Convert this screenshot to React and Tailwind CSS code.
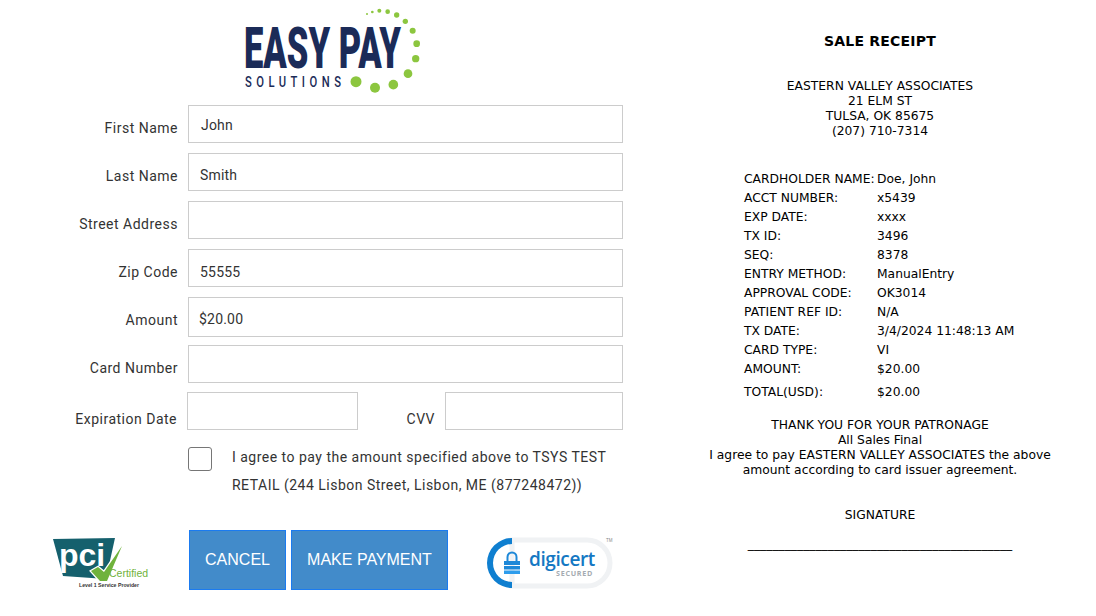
import React from "react";

const Row = ({ label, value, className = "mb-[10px]", h = "h-[38px]", tx = "pl-[11px]", lp = "pt-[9px]" }) => (
  <div className={`flex items-center ${className}`}>
    <label className={`w-[178px] text-right text-[14px] tracking-[0.5px] text-[#333] ${lp} shrink-0`}>{label}</label>
    <div className={`ml-[10px] w-[435px] ${h} border border-[#ccc] flex items-center ${tx} text-[14px] tracking-[0.2px] text-[#333]`}>{value}</div>
  </div>
);

const rows = [
  ["CARDHOLDER NAME:", "Doe, John"],
  ["ACCT NUMBER:", "x5439"],
  ["EXP DATE:", "xxxx"],
  ["TX ID:", "3496"],
  ["SEQ:", "8378"],
  ["ENTRY METHOD:", "ManualEntry"],
  ["APPROVAL CODE:", "OK3014"],
  ["PATIENT REF ID:", "N/A"],
  ["TX DATE:", "3/4/2024 11:48:13 AM"],
  ["CARD TYPE:", "VI"],
  ["AMOUNT:", "$20.00"],
];

const dots = [[411,42,3],[427,36,4],[448,32,6],[473,35,7],[500,45,8],[526,64,8],[548,92,9],[560,131,10],[557,176,11],[534,221,13],[490,254,14.5],[435,263,15],[378,245,16.5]];

export default function App() {
  return (
    <div className="w-[1096px] h-[616px] bg-white overflow-hidden flex font-['Roboto',sans-serif]">
      <div className="w-[660px] shrink-0 flex flex-col">
        <div className="h-[105px] pl-[230px] shrink-0">
          <div className="relative w-[200px] h-[100px]">
            <span className="absolute left-[14px] top-[26px] font-black text-[58px] leading-[44px] text-[#1b2b58] origin-left scale-x-[0.595] whitespace-nowrap">EASY PAY</span>
            <span className="absolute left-[15px] top-[75px] text-[14px] leading-[14px] font-medium text-[#1b2b58] tracking-[5.6px] origin-left scale-x-[0.8] whitespace-nowrap">SOLUTIONS</span>
            <svg viewBox="0 0 600 300" className="absolute inset-0 w-[200px] h-[100px]">
              {dots.map(([x,y,r]) => (
                <circle key={x} cx={x} cy={y} r={r} fill="#8cc63f" />
              ))}
            </svg>
          </div>
        </div>
        <div className="flex flex-col">
          <Row label="First Name" value={<span className="pt-[2px]">John</span>} tx="pl-[12px]" />
          <Row label="Last Name" value={<span className="pt-[6px]">Smith</span>} />
          <Row label="Street Address" value="" />
          <Row label="Zip Code" value={<span className="pt-[8px]">55555</span>} />
          <Row label="Amount" lp="pt-[7px]" value={<span className="pt-[4px]">$20.00</span>} h="h-[40px]" className="mb-[8px]" tx="pl-[10px]" />
          <Row label="Card Number" value="" />
          <div className="flex items-center mt-[-1px] mb-[10px]">
            <label className="w-[177px] text-right text-[14px] tracking-[0.5px] text-[#333] pt-[16px] shrink-0">Expiration Date</label>
            <div className="ml-[10px] w-[171px] h-[38px] border border-[#ccc]"></div>
            <label className="w-[77px] text-right text-[14px] tracking-[0.5px] text-[#333] pt-[16px]">CVV</label>
            <div className="ml-[10px] w-[178px] h-[38px] border border-[#ccc]"></div>
          </div>
          <div className="flex ml-[188px] h-[61px]">
            <div className="mt-[7px] w-[24px] h-[24px] border border-[#767676] rounded-[3px] shrink-0"></div>
            <p className="ml-[20px] mt-[3px] w-[385px] text-[14px] leading-[28px] tracking-[0.49px] text-[#333]">I agree to pay the amount specified above to TSYS TEST RETAIL (244 Lisbon Street, Lisbon, ME (877248472))</p>
          </div>
          <div className="flex mt-[29px] h-[60px]">
            <div className="relative w-[189px] shrink-0">
              <svg viewBox="0 0 120 70" className="absolute left-[40px] top-[-5px] w-[120px] h-[70px]">
                <path d="M13 14 L75 13 L66 54 L23 51 Z" fill="#15606d" />
                <text x="19" y="41" fontFamily="'Liberation Sans',sans-serif" fontWeight="700" fontSize="32" fill="#fff">pci</text>
                <path d="M51 46 L58 42 L64 47 L82 21 L67 56 L60 56 Z" fill="#fff" stroke="#fff" strokeWidth="2.5" />
                <path d="M51 46 L58 42 L64 47 L82 21 L67 56 L60 56 Z" fill="#6fb23c" />
                <text x="69" y="52" fontFamily="'Liberation Sans',sans-serif" fontSize="10.5" fill="#6fb23c">Certified</text>
                <text x="39" y="62" fontFamily="'Liberation Sans',sans-serif" fontWeight="700" fontSize="5.2" fill="#333">Level 1 Service Provider</text>
              </svg>
            </div>
            <div className="w-[97px] h-[60px] bg-[#428bca] border border-[#1b7bf0] flex items-center justify-center text-white text-[16px] font-['Liberation_Sans',sans-serif]">CANCEL</div>
            <div className="ml-[5px] w-[157px] h-[60px] bg-[#428bca] border border-[#1b7bf0] flex items-center justify-center text-white text-[16px] font-['Liberation_Sans',sans-serif]">MAKE PAYMENT</div>
            <div className="relative flex-1">
              <svg viewBox="0 0 160 70" className="absolute left-[22px] top-[-5px] w-[160px] h-[70px]">
                <path d="M42 15 H117 A23 23 0 0 1 117 61 H42 Z" fill="#fff" stroke="#f0f2f4" strokeWidth="5" />
                <path d="M42 13 A25 25 0 0 0 42 63 L42 57 A19 19 0 0 1 42 19 Z" fill="#0f7fd0" />
                <rect x="34" y="36" width="16" height="4" fill="#1e88d8" />
                <rect x="34" y="41" width="16" height="3.5" fill="#1e88d8" />
                <rect x="34" y="45.5" width="16" height="3.5" fill="#2d9cec" />
                <path d="M37.5 36 V32 A4.5 4.5 0 0 1 46.5 32 V36" fill="none" stroke="#1e88d8" strokeWidth="2" />
                <text x="59" y="41" fontFamily="'Open Sans',sans-serif" fontWeight="600" fontSize="19" letterSpacing="-0.4" fill="#1478c3">digicert</text>
                <text x="86" y="51" fontFamily="'Open Sans',sans-serif" fontWeight="700" fontSize="7.2" letterSpacing="0.7" fill="#a4abb1">SECURED</text>
                <text x="136" y="17" fontFamily="'Liberation Sans',sans-serif" fontSize="4.5" fill="#888">TM</text>
              </svg>
            </div>
          </div>
        </div>
      </div>
      <div className="w-[436px] shrink-0 text-[12.3px] leading-[15px] text-black font-['DejaVu_Sans',sans-serif]">
        <div className="ml-[45px] w-[350px]">
          <h1 className="mt-[33px] text-center font-bold text-[14px] leading-[16px] tracking-[0.2px]">SALE RECEIPT</h1>
          <div className="mt-[30px] text-center">
            <p>EASTERN VALLEY ASSOCIATES</p>
            <p>21 ELM ST</p>
            <p>TULSA, OK 85675</p>
            <p>(207) 710-7314</p>
          </div>
        </div>
        <div className="mt-[31px] ml-[84px]">
          {rows.map(([k, v]) => (
            <div key={k} className="flex h-[19px] items-center">
              <span className="w-[133px] shrink-0 whitespace-nowrap">{k}</span>
              <span>{v}</span>
            </div>
          ))}
          <div className="flex h-[19px] items-center mt-[4px]">
            <span className="w-[133px] shrink-0">TOTAL(USD):</span>
            <span>$20.00</span>
          </div>
        </div>
        <div className="ml-[45px] w-[350px] mt-[16px] text-center">
          <p>THANK YOU FOR YOUR PATRONAGE</p>
          <p>All Sales Final</p>
          <p>I agree to pay EASTERN VALLEY ASSOCIATES the above amount according to card issuer agreement.</p>
          <p className="mt-[30px]">SIGNATURE</p>
          <p className="mt-[14px]">___________________________________________</p>
        </div>
      </div>
    </div>
  );
}
